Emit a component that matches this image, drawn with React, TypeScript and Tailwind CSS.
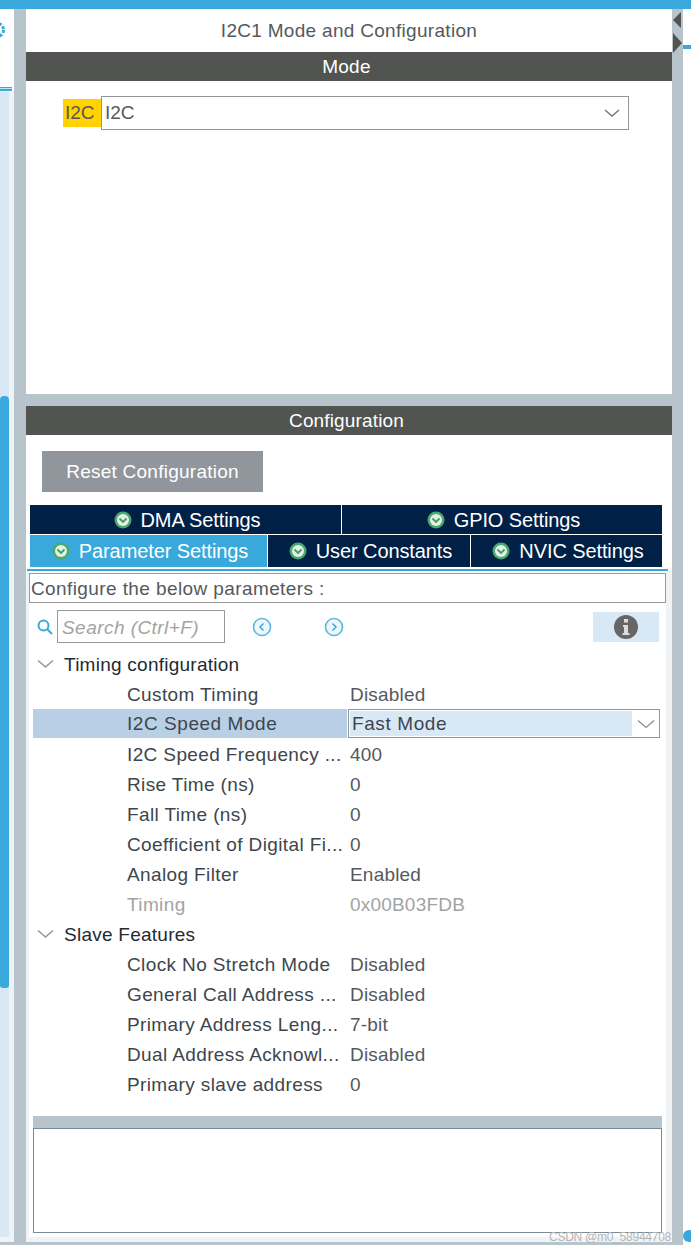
const font = "font-['Liberation_Sans',Arial,sans-serif]";

function CheckBadge() {
    return (
        <svg width="18" height="18" viewBox="0 0 18 18" className="shrink-0">
            <circle cx="9" cy="9" r="8.5" fill="#4aa96c" />
            <circle cx="9" cy="9" r="6" fill="#e4efe8" />
            <path d="M5.5 7.5 L9 11 L12.5 7.5" fill="none" stroke="#3f9e63" strokeWidth="1.8" />
        </svg>
    );
}

function Tab({ label, className }: { label: string; className: string }) {
    return (
        <div className={`flex items-center justify-center gap-[9px] pl-[3px] text-white text-[20px] tracking-[-0.1px] ${className}`}>
            <CheckBadge />
            <span>{label}</span>
        </div>
    );
}

function Group({ label }: { label: string }) {
    return (
        <div className="h-[30px] flex items-center text-[19px] tracking-[0.25px] text-[#1f2a33]">
            <div className="w-[31px] pl-[4px] shrink-0">
                <svg width="17" height="10" viewBox="0 0 17 10">
                    <path d="M1 1.5 L8.5 8 L16 1.5" fill="none" stroke="#8f979c" strokeWidth="1.5" />
                </svg>
            </div>
            <span className="pt-[2px]">{label}</span>
        </div>
    );
}

function Row({ label, value, muted }: { label: string; value: string; muted?: boolean }) {
    return (
        <div className={`h-[30px] pt-[2px] flex items-center text-[19px] ${muted ? "text-[#a3a3a3]" : "text-[#3d464d]"}`}>
            <div className="w-[317px] pl-[94px] shrink-0 whitespace-nowrap tracking-[0.38px]">{label}</div>
            <div className={`tracking-[0.2px] ${muted ? "" : "text-[#55595c]"}`}>{value}</div>
        </div>
    );
}

function SpeedModeRow() {
    return (
        <div className="h-[30px] flex text-[19px] text-[#3d464d]">
            <div className="w-[314px] pl-[94px] pt-[1px] h-[29px] bg-[#b8cfe5] flex items-center shrink-0 tracking-[0.55px]">I2C Speed Mode</div>
            <div className="ml-[1px] w-[312px] h-[29px] border border-[#8f979c] flex">
                <div className="flex-1 m-[1px] bg-[#d9e8f5] pl-[2px] pt-[1px] flex items-center tracking-[0.6px]">Fast Mode</div>
                <div className="w-[26px] flex items-center justify-center">
                    <svg width="18" height="10" viewBox="0 0 18 10">
                        <path d="M1 1.5 L9 8.5 L17 1.5" fill="none" stroke="#8a8a8a" strokeWidth="1.2" />
                    </svg>
                </div>
            </div>
        </div>
    );
}

export default function App() {
    return (
        <div className={`relative w-[691px] h-[1250px] overflow-hidden bg-white flex flex-col ${font}`}>
            <div className="h-[9px] bg-[#39a9dc] shrink-0" />

            <div className="flex h-[1233px] shrink-0">
                {/* left strip */}
                <div className="w-[14px] flex flex-col shrink-0">
                    <div className="h-[78px] pt-[11px] overflow-hidden shrink-0">
                        <svg width="5" height="20" viewBox="0 0 5 20">
                            <circle cx="-3" cy="10" r="6.5" fill="none" stroke="#39a9dc" strokeWidth="3" strokeDasharray="3 1.5" />
                        </svg>
                    </div>
                    <div className="h-[1px] w-[12px] bg-[#39a9dc] shrink-0" />
                    <div className="h-[1px] w-[12px] bg-[#bfe2f4] shrink-0" />
                    <div className="h-[2px] w-[12px] bg-[#39a9dc] shrink-0" />
                    <div className="flex-1 flex bg-[#f0f3f5] pt-[1px]">
                        <div className="w-[9px] flex flex-col bg-[#d9e8f5] mb-[5px]">
                            <div className="h-[304px] shrink-0" />
                            <div className="h-[592px] bg-[#39a9dc] rounded-t-[4px] rounded-b-[3px] shrink-0" />
                        </div>
                    </div>
                </div>

                <div className="w-[12px] bg-[#b8c4cb] shrink-0" />

                {/* main panel */}
                <div className="w-[646px] flex flex-col shrink-0">
                    <div className="h-[43px] pt-[2px] flex items-center justify-center text-[19px] text-[#55595c] tracking-[0.3px]">
                        I2C1 Mode and Configuration
                    </div>
                    <div className="h-[29px] pt-[1px] pr-[5px] bg-[#525452] text-white text-[19px] flex items-center justify-center tracking-[0.3px]">Mode</div>
                    <div className="h-[313px] pt-[15px] pl-[37px] flex items-start">
                        <div className="mt-[3px] w-[38px] h-[28px] bg-[#ffd200] text-[#55595c] text-[19px] flex items-center pl-[2px]">I2C</div>
                        <div className="w-[528px] h-[34px] border border-[#8f979c] flex items-center justify-between pl-[3px] pr-[8px] text-[19px] text-[#55595c]">
                            <span>I2C</span>
                            <svg width="16" height="10" viewBox="0 0 16 10">
                                <path d="M1 2 L8 8 L15 2" fill="none" stroke="#777" strokeWidth="1.5" />
                            </svg>
                        </div>
                    </div>
                    <div className="h-[12px] bg-[#b8c4cb]" />
                    <div className="h-[29px] pt-[1px] pr-[5px] bg-[#525452] text-white text-[19px] flex items-center justify-center tracking-[0.15px]">Configuration</div>

                    <div className="flex-1 flex flex-col pt-[16px]">
                        <div className="ml-[16px] w-[221px] h-[41px] pt-[1px] bg-[#90969b] text-white text-[19px] flex items-center justify-center tracking-[0.25px]">
                            Reset Configuration
                        </div>

                        <div className="mt-[13px] ml-[4px] w-[632px] h-[29px] pt-[1px] flex">
                            <Tab label="DMA Settings" className="w-[311px] bg-[#002046] -mt-[1px]" />
                            <div className="w-[1px] bg-white -mt-[1px]" />
                            <Tab label="GPIO Settings" className="w-[320px] bg-[#002046] -mt-[1px]" />
                        </div>
                        <div className="ml-[4px] w-[632px] h-[33px] flex border-t border-white">
                            <Tab label="Parameter Settings" className="w-[237px] bg-[#39a9dc]" />
                            <div className="w-[1px] bg-white" />
                            <Tab label="User Constants" className="w-[202px] bg-[#002046]" />
                            <div className="w-[1px] bg-white" />
                            <Tab label="NVIC Settings" className="w-[191px] bg-[#002046]" />
                        </div>
                        <div className="mt-[2px] ml-[1px] h-[2px] w-[641px] bg-[#39a9dc]" />

                        {/* parameter area, light margins on the sides and below */}
                        <div className="flex-1 flex flex-col border-l-[3px] border-r-[6px] border-b-[5px] border-[#f0f3f5]">
                            <div className="mt-[2px] h-[30px] pt-[2px] border border-[#9a9a9a] flex items-center pl-[1px] text-[19px] text-[#55595c] tracking-[0.4px]">
                                Configure the below parameters :
                            </div>

                            {/* search row */}
                            <div className="mt-[7px] h-[32px] flex items-center">
                                <svg width="18" height="18" viewBox="0 0 18 18" className="ml-[7px] mr-[3px] mt-[1px] shrink-0">
                                    <circle cx="7.5" cy="7.5" r="5" fill="none" stroke="#39a9dc" strokeWidth="2" />
                                    <path d="M11 11 L16 16" stroke="#39a9dc" strokeWidth="2" />
                                </svg>
                                <div className="w-[168px] h-[33px] pt-[4px] border border-[#9a9a9a] flex items-center pl-[4px] text-[19px] tracking-[0.45px] italic text-[#a3a3a3]">
                                    Search (Ctrl+F)
                                </div>
                                <svg width="20" height="20" viewBox="0 0 20 20" className="ml-[27px] mt-[1px] shrink-0">
                                    <circle cx="10" cy="10" r="8.5" fill="#eef6fb" stroke="#5bb8e4" strokeWidth="1.6" />
                                    <path d="M11.5 6.5 L8 10 L11.5 13.5" fill="none" stroke="#39a9dc" strokeWidth="1.5" />
                                </svg>
                                <svg width="20" height="20" viewBox="0 0 20 20" className="ml-[52px] mt-[1px] shrink-0">
                                    <circle cx="10" cy="10" r="8.5" fill="#eef6fb" stroke="#5bb8e4" strokeWidth="1.6" />
                                    <path d="M8.5 6.5 L12 10 L8.5 13.5" fill="none" stroke="#39a9dc" strokeWidth="1.5" />
                                </svg>
                                <div className="ml-[249px] mt-[1px] w-[66px] h-[30px] bg-[#d9e8f5] flex items-center justify-center">
                                    <svg width="24" height="24" viewBox="0 0 24 24">
                                        <circle cx="12" cy="12" r="12" fill="#666" />
                                        <rect x="10" y="4" width="4" height="3.5" fill="#ddd" />
                                        <path d="M9 10 H14 V18 H15.5 V20 H8.5 V18 H10 V12 H9 Z" fill="#ddd" />
                                    </svg>
                                </div>
                            </div>

                            {/* parameter tree */}
                            <div className="mt-[7px] pl-[4px]">
                                <Group label="Timing configuration" />
                                <Row label="Custom Timing" value="Disabled" />
                                <SpeedModeRow />
                                <Row label="I2C Speed Frequency ..." value="400" />
                                <Row label="Rise Time (ns)" value="0" />
                                <Row label="Fall Time (ns)" value="0" />
                                <Row label="Coefficient of Digital Fi..." value="0" />
                                <Row label="Analog Filter" value="Enabled" />
                                <Row label="Timing" value="0x00B03FDB" muted />
                                <Group label="Slave Features" />
                                <Row label="Clock No Stretch Mode" value="Disabled" />
                                <Row label="General Call Address ..." value="Disabled" />
                                <Row label="Primary Address Leng..." value="7-bit" />
                                <Row label="Dual Address Acknowl..." value="Disabled" />
                                <Row label="Primary slave address" value="0" />
                            </div>

                            {/* bottom description box */}
                            <div className="mt-[17px] ml-[4px] w-[629px] h-[12px] bg-[#b8c4cb]" />
                            <div className="ml-[4px] w-[629px] h-[105px] border border-[#7b8a97] bg-white" />
                        </div>
                    </div>
                </div>

                <div className="w-[11px] bg-[#b8c4cb] shrink-0 flex flex-col items-start pt-[1px]">
                    <svg width="11" height="46" viewBox="0 0 11 46">
                        <path d="M9 2 V18 L1 10 Z" fill="#525452" />
                        <path d="M1 23 V43 L10 33 Z" fill="#525452" />
                    </svg>
                </div>

                <div className="flex-1 pt-[36px]">
                    <div className="h-[4px] bg-[#39a9dc]" />
                </div>
            </div>

            <div className="h-[3px] w-[683px] bg-[#b8c4cb] shrink-0" />

            {/* screenshot watermark */}
            <div className="absolute left-[683px] top-[1230px] w-[12px] h-[12px] rounded-full bg-[#39a9dc]" />
            <div className="absolute left-[549px] top-[1228px] text-[12px] tracking-[-0.25px] text-[#b5b5b5] whitespace-nowrap">CSDN @m0_58944708</div>
        </div>
    );
}
